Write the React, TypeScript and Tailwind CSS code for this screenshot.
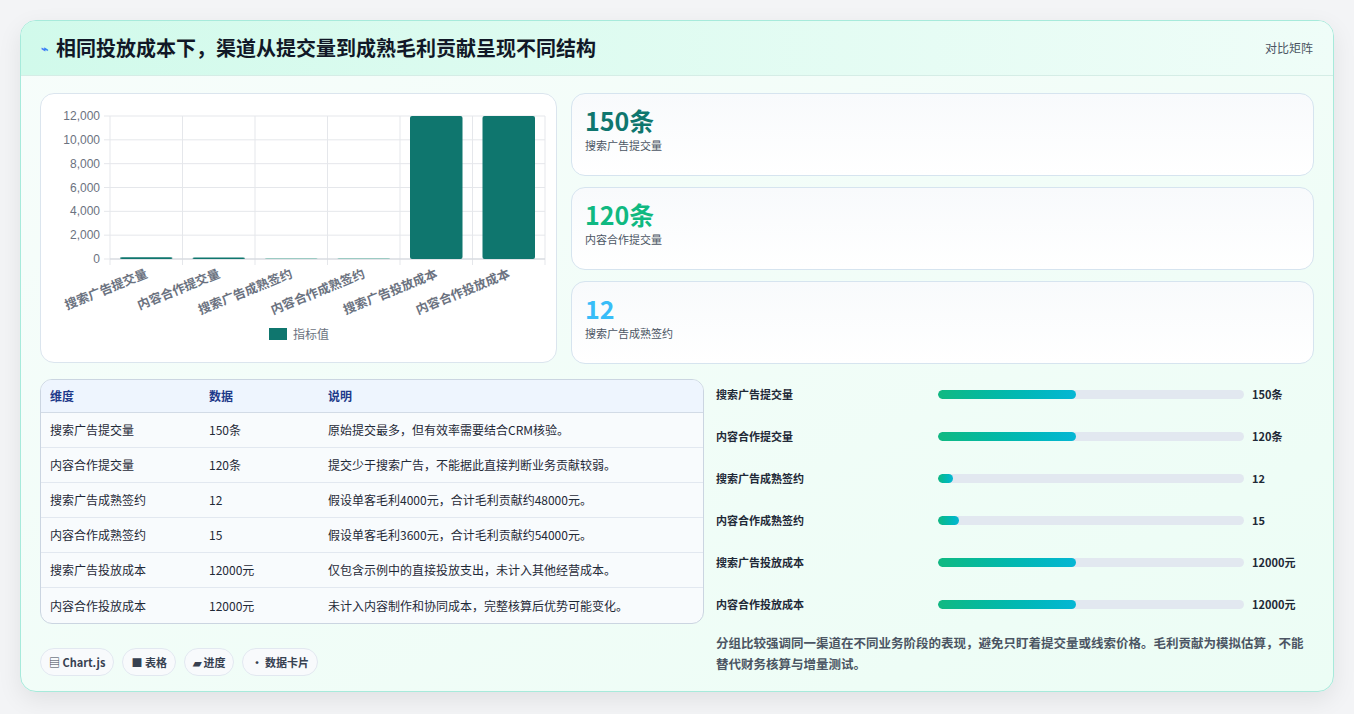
import React from "react";

const font = { fontFamily: '"Noto Sans CJK SC", "Noto Sans", sans-serif' };

const cats = ["搜索广告提交量", "内容合作提交量", "搜索广告成熟签约", "内容合作成熟签约", "搜索广告投放成本", "内容合作投放成本"];
const vals = [150, 120, 12, 15, 12000, 12000];

function Chart() {
  const L = 69, R = 504, T = 22, B = 165;
  const cw = (R - L) / 6;
  const y = (v: number) => B - (v / 12000) * (B - T);
  return (
    <svg width="516" height="269" className="block">
      {[0, 2000, 4000, 6000, 8000, 10000, 12000].map((t) => (
        <g key={t}>
          <line x1={L - 6} x2={R} y1={y(t)} y2={y(t)} stroke="#e5e7eb" />
          <text x={L - 10} y={y(t) + 4} textAnchor="end" fontSize="12" fill="#6b7280" fontFamily="Liberation Sans, sans-serif">{t.toLocaleString("en-US")}</text>
        </g>
      ))}
      {Array.from({ length: 7 }).map((_, i) => (
        <line key={i} x1={L + i * cw} x2={L + i * cw} y1={T} y2={B + 6} stroke="#e5e7eb" />
      ))}
      <line x1={L} x2={R} y1={B} y2={B} stroke="#d1d5db" />
      {vals.map((v, i) => {
        const h = Math.max(B - y(v), 1);
        return <rect key={i} x={L + i * cw + 10} y={B - h} width={cw - 20} height={h} rx="2" fill={v < 20 ? "#9ccbc3" : "#0f766e"} />;
      })}
      {cats.map((c, i) => (
        <text key={c} transform={`translate(${L + i * cw + cw / 2 + 2},${B + 18}) rotate(-22)`} textAnchor="end" fontSize="12.5" fill="#6b7280" fontWeight="600" style={font}>{c}</text>
      ))}
      <rect x="228" y="234" width="18" height="12" fill="#0f766e" />
      <text x="252" y="245" fontSize="12" fill="#6b7280" style={font}>指标值</text>
    </svg>
  );
}

const stats = [
  { v: "150条", l: "搜索广告提交量", c: "text-[#0f766e]" },
  { v: "120条", l: "内容合作提交量", c: "text-[#10b981]" },
  { v: "12", l: "搜索广告成熟签约", c: "text-[#38bdf8]" },
];

const rows = [
  ["搜索广告提交量", "150条", "原始提交最多，但有效率需要结合CRM核验。"],
  ["内容合作提交量", "120条", "提交少于搜索广告，不能据此直接判断业务贡献较弱。"],
  ["搜索广告成熟签约", "12", "假设单客毛利4000元，合计毛利贡献约48000元。"],
  ["内容合作成熟签约", "15", "假设单客毛利3600元，合计毛利贡献约54000元。"],
  ["搜索广告投放成本", "12000元", "仅包含示例中的直接投放支出，未计入其他经营成本。"],
  ["内容合作投放成本", "12000元", "未计入内容制作和协同成本，完整核算后优势可能变化。"],
];

const bars: [string, number, string][] = [
  ["搜索广告提交量", 45, "150条"],
  ["内容合作提交量", 45, "120条"],
  ["搜索广告成熟签约", 5, "12"],
  ["内容合作成熟签约", 7, "15"],
  ["搜索广告投放成本", 45, "12000元"],
  ["内容合作投放成本", 45, "12000元"],
];

export default function App() {
  return (
    <div className="w-[1354px] h-[714px] bg-[#f3f4f6] pt-[20px] pl-[20px]" style={font}>
      <div className="w-[1314px] h-[672px] rounded-[16px] border border-[#a7eadb] bg-gradient-to-br from-[#f7fdfb] to-[#ecfdf5] shadow-[0_8px_24px_rgba(0,0,0,0.08)] overflow-hidden">
        <div className="h-[55px] flex items-center justify-between px-[20px] border-b border-[#d5ede6] bg-gradient-to-r from-[#d1faeb] to-[#effdf8]">
          <div className="flex items-center gap-[8px]">
            <span className="text-[#3b82f6] text-[12px] font-bold">⌁</span>
            <span className="text-[20px] font-bold text-[#111827]">相同投放成本下，渠道从提交量到成熟毛利贡献呈现不同结构</span>
          </div>
          <span className="text-[12px] text-[#4b5563]">对比矩阵</span>
        </div>
        <div className="px-[19px] pt-[17px]">
          <div className="flex gap-[14px]">
            <div className="w-[517px] h-[270px] rounded-[14px] border border-[#dbe5ee] bg-white">
              <Chart />
            </div>
            <div className="flex-1 flex flex-col gap-[11px]">
              {stats.map((s) => (
                <div key={s.l} className="h-[83px] rounded-[14px] border border-[#d6e4ef] bg-gradient-to-b from-[#f8fafc] to-white px-[13px] pt-[10px]">
                  <div className={`text-[25px] font-bold leading-[32px] ${s.c}`}>{s.v}</div>
                  <div className="text-[11px] text-[#4b5563] mt-[1px]">{s.l}</div>
                </div>
              ))}
            </div>
          </div>
          <div className="flex gap-[12px] mt-[15px]">
            <div className="w-[664px]">
              <div className="rounded-[12px] border border-[#cbd5e1] overflow-hidden bg-[#f8fbfd]">
                <div className="flex h-[33px] items-center bg-[#eef5fe] border-b border-[#d2dbe6] text-[12px] font-bold text-[#1e3a8a]">
                  <div className="w-[168px] pl-[9px]">维度</div>
                  <div className="w-[119px]">数据</div>
                  <div>说明</div>
                </div>
                {rows.map((r, i) => (
                  <div key={i} className={`flex h-[35px] items-center text-[12px] text-[#1f2937] ${i < 5 ? "border-b border-[#e2e8f0]" : ""}`}>
                    <div className="w-[168px] pl-[9px]">{r[0]}</div>
                    <div className="w-[119px]">{r[1]}</div>
                    <div>{r[2]}</div>
                  </div>
                ))}
              </div>
              <div className="flex gap-[8px] mt-[24px]">
                {["▤ Chart.js", "■ 表格", "▰ 进度", "• 数据卡片"].map((b) => (
                  <span key={b} className="h-[28px] px-[8px] flex items-center rounded-full border border-[#e2e8f0] bg-[#f8fafc] text-[11px] font-bold text-[#374151]">{b}</span>
                ))}
              </div>
            </div>
            <div className="flex-1 -mt-[6px]">
              <div className="flex flex-col">
                {bars.map((b) => (
                  <div key={b[0]} className="h-[42px] flex items-center text-[11px] font-bold text-[#1f2937]">
                    <div className="w-[222px]">{b[0]}</div>
                    <div className="w-[306px] h-[9px] rounded-full bg-[#e2e8f0] overflow-hidden">
                      <div className="h-full rounded-full bg-gradient-to-r from-[#10b981] to-[#06b6d4]" style={{ width: `${b[1]}%` }} />
                    </div>
                    <div className="ml-[8px]">{b[2]}</div>
                  </div>
                ))}
              </div>
              <p className="mt-[7px] text-[12.5px] leading-[21px] font-bold text-[#4b5563]">分组比较强调同一渠道在不同业务阶段的表现，避免只盯着提交量或线索价格。毛利贡献为模拟估算，不能替代财务核算与增量测试。</p>
            </div>
          </div>
        </div>
      </div>
    </div>
  );
}
